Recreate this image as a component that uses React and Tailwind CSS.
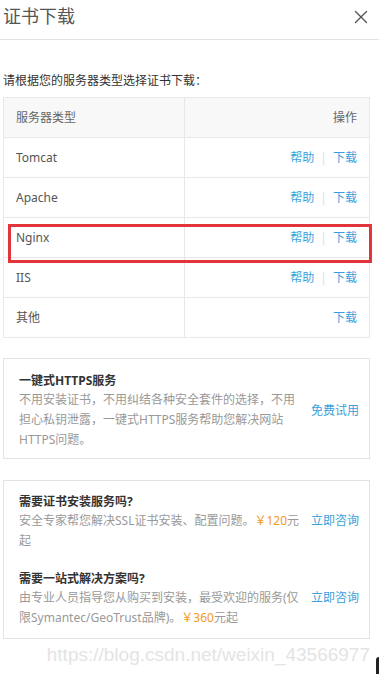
import { X } from 'lucide-react';

const font = { fontFamily: '"Noto Sans", "Noto Sans CJK SC", sans-serif' };

const rows = [
  { name: 'Tomcat', help: true },
  { name: 'Apache', help: true },
  { name: 'Nginx', help: true, marked: true },
  { name: 'IIS', help: true },
  { name: '其他', help: false },
];

function Actions({ help }) {
  return (
    <span className="text-[12px] text-[#3a9fdc]">
      {help && (
        <>
          帮助<span className="mx-[6px] text-[#dcdcdc]">|</span>
        </>
      )}
      下载
    </span>
  );
}

export default function App() {
  return (
    <div className="relative w-[379px] h-[674px] overflow-hidden bg-white" style={font}>
      {/* header */}
      <div className="h-[40px] border-b border-[#e3e3e3] flex items-start justify-between pl-[3px] pr-[7px] pt-[3px]">
        <h2 className="text-[18px] leading-[26px] text-[#555]">证书下载</h2>
        <X className="w-[22px] h-[22px] mt-[3px] text-[#555]" strokeWidth={1.5} />
      </div>

      <div className="ml-[3px] w-[367px]">
        <p className="mt-[31px] text-[12px] leading-[20px] text-[#333]">请根据您的服务器类型选择证书下载：</p>

        {/* server table */}
        <table className="mt-[6px] w-full table-fixed border-collapse text-[12px]">
          <colgroup>
            <col className="w-[181px]" />
            <col />
          </colgroup>
          <thead>
            <tr className="h-[40px] bg-[#f8f8f8] text-[#666]">
              <th className="border border-[#e8e8e8] px-[12px] text-left font-normal">服务器类型</th>
              <th className="border border-[#e8e8e8] px-[12px] text-right font-normal">操作</th>
            </tr>
          </thead>
          <tbody>
            {rows.map(r => (
              <tr key={r.name} className="h-[40px] text-[#555]">
                <td className="relative border border-[#e8e8e8] px-[12px]">
                  {r.name}
                  {r.marked && (
                    <div className="absolute left-[4px] top-[6px] w-[364px] h-[39px] border-[3px] border-[#e2353b] pointer-events-none" />
                  )}
                </td>
                <td className="border border-[#e8e8e8] px-[12px] text-right">
                  <Actions help={r.help} />
                </td>
              </tr>
            ))}
          </tbody>
        </table>

        {/* https service */}
        <div className="mt-[20px] border border-[#e3e3e3] pl-[15px] pr-[10px] pt-[13px] pb-[8px] flex items-center">
          <div className="w-[282px] shrink-0 text-[12px]">
            <h4 className="font-bold text-[#333] leading-[18px]">一键式HTTPS服务</h4>
            <p className="text-[#999] leading-[20px]">不用安装证书，不用纠结各种安全套件的选择，不用担心私钥泄露，一键式HTTPS服务帮助您解决网站HTTPS问题。</p>
          </div>
          <a className="ml-[10px] shrink-0 whitespace-nowrap text-[12px] text-[#3a9fdc]">免费试用</a>
        </div>

        {/* install services */}
        <div className="mt-[21px] border border-[#e3e3e3] pl-[15px] pr-[10px] pt-[12px] pb-[10px] flex flex-col gap-[19px] text-[12px]">
          <div>
            <h4 className="font-bold text-[#333] leading-[18px]">需要证书安装服务吗?</h4>
            <div className="flex items-start">
              <p className="w-[282px] shrink-0 text-[#999] leading-[20px]">
                安全专家帮您解决SSL证书安装、配置问题。<span className="text-[#f39a1e]">￥120</span>元起
              </p>
              <a className="ml-[10px] shrink-0 whitespace-nowrap leading-[20px] text-[#3a9fdc]">立即咨询</a>
            </div>
          </div>
          <div>
            <h4 className="font-bold text-[#333] leading-[18px]">需要一站式解决方案吗?</h4>
            <div className="flex items-start">
              <p className="w-[282px] shrink-0 text-[#999] leading-[20px]">
                由专业人员指导您从购买到安装，最受欢迎的服务(仅限Symantec/GeoTrust品牌)。<span className="text-[#f39a1e]">￥360</span>元起
              </p>
              <a className="ml-[10px] shrink-0 whitespace-nowrap leading-[20px] text-[#3a9fdc]">立即咨询</a>
            </div>
          </div>
        </div>
      </div>

      {/* watermark */}
      <div className="absolute right-[9px] top-[643px] text-[19px] leading-[24px] text-[#e4e4e4]" style={{ fontFamily: '"Liberation Sans", Arial, sans-serif' }}>
        https://blog.csdn.net/weixin_43566977
      </div>
      <div className="absolute right-[-6px] top-[657px] w-[9px] h-[24px] rounded-[3px] bg-[#222]" />
    </div>
  );
}
